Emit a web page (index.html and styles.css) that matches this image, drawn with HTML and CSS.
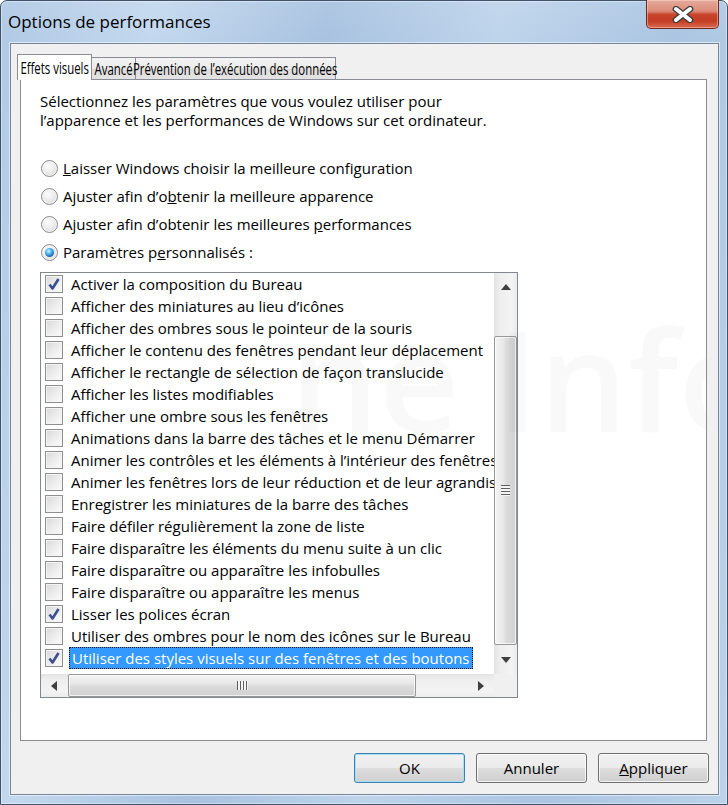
FILE: index.html
```html
<!DOCTYPE html>
<html lang="fr">
<head>
  <meta charset="UTF-8">
  <title>Options de performances</title>
  <link rel="stylesheet" href="styles.css">
</head>
<body>

  <div class="window">
    <div class="titlebar">
      <span class="title">Options de performances</span>
      <button class="close-btn" title="Fermer">
        <svg width="24" height="17" viewBox="0 0 24 17">
          <path d="M5 3 L19 14 M19 3 L5 14" stroke="#3b3b3b" stroke-width="6.5" stroke-linecap="round"/>
          <path d="M5 3 L19 14 M19 3 L5 14" stroke="#ffffff" stroke-width="4" stroke-linecap="round"/>
        </svg>
      </button>
    </div>

    <div class="client">
      <div class="tabs">
        <div class="tab active tab-effects"><span>Effets visuels</span></div>
        <div class="tab tab-advanced"><span>Avancé</span></div>
        <div class="tab tab-dep"><span>Prévention de l’exécution des données</span></div>
      </div>

      <div class="panel">
        <p class="intro">Sélectionnez les paramètres que vous voulez utiliser pour<br>l’apparence et les performances de Windows sur cet ordinateur.</p>

        <div class="radios">
          <label class="radio"><span class="dot"></span><span><u>L</u>aisser Windows choisir la meilleure configuration</span></label>
          <label class="radio"><span class="dot"></span><span>Ajuster afin d’o<u>b</u>tenir la meilleure apparence</span></label>
          <label class="radio"><span class="dot"></span><span>Ajuster afin d’obtenir les meilleures <u>p</u>erformances</span></label>
          <label class="radio"><span class="dot checked"></span><span>Paramètres p<u>e</u>rsonnalisés :</span></label>
        </div>

        <div class="listbox">
          <ul class="items">
            <li><span class="check on"></span>Activer la composition du Bureau</li>
            <li><span class="check"></span>Afficher des miniatures au lieu d’icônes</li>
            <li><span class="check"></span>Afficher des ombres sous le pointeur de la souris</li>
            <li><span class="check"></span>Afficher le contenu des fenêtres pendant leur déplacement</li>
            <li><span class="check"></span>Afficher le rectangle de sélection de façon translucide</li>
            <li><span class="check"></span>Afficher les listes modifiables</li>
            <li><span class="check"></span>Afficher une ombre sous les fenêtres</li>
            <li><span class="check"></span>Animations dans la barre des tâches et le menu Démarrer</li>
            <li><span class="check"></span>Animer les contrôles et les éléments à l’intérieur des fenêtres</li>
            <li><span class="check"></span>Animer les fenêtres lors de leur réduction et de leur agrandissement</li>
            <li><span class="check"></span>Enregistrer les miniatures de la barre des tâches</li>
            <li><span class="check"></span>Faire défiler régulièrement la zone de liste</li>
            <li><span class="check"></span>Faire disparaître les éléments du menu suite à un clic</li>
            <li><span class="check"></span>Faire disparaître ou apparaître les infobulles</li>
            <li><span class="check"></span>Faire disparaître ou apparaître les menus</li>
            <li><span class="check on"></span>Lisser les polices écran</li>
            <li><span class="check"></span>Utiliser des ombres pour le nom des icônes sur le Bureau</li>
            <li class="selected"><span class="check on"></span><span class="label">Utiliser des styles visuels sur des fenêtres et des boutons</span></li>
          </ul>

          <div class="vscroll">
            <div class="sb-btn">
              <svg width="10" height="6" viewBox="0 0 10 6"><path d="M0 6 L5 0 L10 6 Z" fill="#3f3f3f"/></svg>
            </div>
            <div class="sb-track">
              <div class="thumb-v"><span class="grip-v"></span></div>
            </div>
            <div class="sb-btn">
              <svg width="10" height="6" viewBox="0 0 10 6"><path d="M0 0 L10 0 L5 6 Z" fill="#3f3f3f"/></svg>
            </div>
          </div>

          <div class="hscroll">
            <div class="sb-btn">
              <svg width="6" height="10" viewBox="0 0 6 10"><path d="M6 0 L6 10 L0 5 Z" fill="#3f3f3f"/></svg>
            </div>
            <div class="sb-track">
              <div class="thumb-h"><span class="grip-h"></span></div>
            </div>
            <div class="sb-btn">
              <svg width="6" height="10" viewBox="0 0 6 10"><path d="M0 0 L6 5 L0 10 Z" fill="#3f3f3f"/></svg>
            </div>
          </div>

          <div class="sb-corner"></div>
        </div>

        <div class="watermark">ne Info</div>
      </div>

      <div class="buttons">
        <button class="btn default">OK</button>
        <button class="btn">Annuler</button>
        <button class="btn"><u>A</u>ppliquer</button>
      </div>
    </div>
  </div>

</body>
</html>
```

FILE: styles.css
```css
* {
  box-sizing: border-box;
}

body {
  margin: 0;
  font-family: "Open Sans", "Noto Sans", sans-serif;
  font-size: 15px;
  color: #000;
}

/* window frame (aero glass) */
.window {
  width: 728px;
  height: 805px;
  display: flex;
  flex-direction: column;
  border: 1px solid #3f526a;
  border-radius: 7px 7px 0 0;
  box-shadow: inset 0 0 0 1px rgba(255, 255, 255, 0.4);
  background:
    linear-gradient(180deg, rgba(255, 255, 255, 0.08), rgba(255, 255, 255, 0) 40px),
    linear-gradient(100deg, #b0c9e5 0%, #c3d8ee 18%, #a8c2e0 38%, #bed4eb 58%, #abc5e2 78%, #bcd2ea 100%);
}

.titlebar {
  height: 42px;
  display: flex;
  justify-content: space-between;
  align-items: flex-start;
}

.title {
  font-size: 17px;
  line-height: 24px;
  margin: 9px 0 0 7px;
}

.close-btn {
  width: 73px;
  height: 29px;
  margin: -1px 8px 0 0;
  padding: 0;
  border: 1px solid #6e2a1e;
  border-top: none;
  border-radius: 0 0 5px 5px;
  display: flex;
  align-items: center;
  justify-content: center;
  background: linear-gradient(180deg, #e6ab9c 0%, #dc8b78 40%, #c9432b 52%, #c53d25 75%, #d86b51 100%);
  box-shadow: inset 0 0 0 1px rgba(255, 220, 210, 0.45);
}

/* dialog client area */
.client {
  flex: 1;
  margin: 0 8px 9px 9px;
  padding: 10px 9px 0 6px;
  background: #f0f0f0;
  border: 1px solid #76869a;
  box-shadow: 0 0 0 1px rgba(255, 255, 255, 0.55);
  display: flex;
  flex-direction: column;
}

.tabs {
  height: 25px;
  display: flex;
  align-items: flex-end;
}

.tab {
  height: 22px;
  border: 1px solid #898c95;
  border-bottom: none;
  display: flex;
  align-items: center;
  justify-content: center;
  white-space: nowrap;
  background: linear-gradient(180deg, #f3f3f3 0%, #ebebeb 50%, #dedede 51%, #e3e3e3 100%);
}

/* tab captions are drawn narrower than body text */
.tab span {
  display: inline-block;
  font-size: 16.5px;
  transform: scaleX(0.69);
}

.tab.active {
  height: 26px;
  margin-bottom: -1px;
  position: relative;
  z-index: 1;
  background: #fff;
}

.tab-effects { width: 75px; }
.tab-advanced { width: 45px; margin-left: -1px; }
.tab-dep { width: 201px; margin-left: -1px; }

.panel {
  height: 662px;
  margin: 0 2px 0 3px;
  padding: 12px 19px 0;
  background: #fff;
  border: 1px solid #898c95;
  position: relative;
  overflow: hidden;
}

.intro {
  margin: 0;
  line-height: 19px;
}

.radios {
  margin-top: 24px;
  display: flex;
  flex-direction: column;
}

.radio {
  height: 28px;
  display: flex;
  align-items: center;
  gap: 5px;
  padding-left: 1px;
}

.dot {
  width: 17px;
  height: 17px;
  border-radius: 50%;
  border: 1px solid #8a8a8a;
  background: radial-gradient(circle at 40% 35%, #fdfdfd 0%, #ececec 45%, #d2d2d2 100%);
  box-shadow: inset 0 0 0 1px #f6f6f6;
  display: flex;
  align-items: center;
  justify-content: center;
}

.dot.checked::after {
  content: "";
  width: 9px;
  height: 9px;
  border-radius: 50%;
  background: radial-gradient(circle at 40% 35%, #d4f3ff 0%, #5cc2f5 30%, #1c68b4 70%, #0d3b73 100%);
}

/* list of visual effects */
.listbox {
  margin-top: 6px;
  width: 478px;
  height: 426px;
  border: 1px solid #828790;
  display: grid;
  grid-template-columns: 453px 23px;
  grid-template-rows: 401px 23px;
}

.items {
  list-style: none;
  margin: 0;
  padding: 0;
  overflow: hidden;
}

.items li {
  height: 22px;
  display: flex;
  align-items: center;
  padding-left: 4px;
  white-space: nowrap;
}

.check {
  flex: none;
  width: 18px;
  height: 18px;
  margin-right: 8px;
  border: 1px solid #8e8f8f;
  background: linear-gradient(135deg, #d8d8d8 0%, #ececec 50%, #fbfbfb 100%);
  box-shadow: inset 0 0 0 1px #f4f4f4;
}

.check.on {
  background:
    url("data:image/svg+xml,%3Csvg xmlns='http://www.w3.org/2000/svg' width='16' height='16' viewBox='0 0 16 16'%3E%3Cpath d='M3.5 8.5 L6.5 12.5 L12.5 3' fill='none' stroke='%233b4f91' stroke-width='2.6' stroke-linejoin='round'/%3E%3C/svg%3E") center / 16px 16px no-repeat,
    linear-gradient(135deg, #d8d8d8 0%, #ececec 50%, #fbfbfb 100%);
}

.selected .label {
  margin-left: -2px;
  padding: 0 2px;
  height: 22px;
  line-height: 20px;
  color: #fff;
  background: #3399ff;
  border: 1px dotted #1a1a1a;
}

/* scrollbars */
.vscroll {
  display: flex;
  flex-direction: column;
  background: linear-gradient(90deg, #e3e3e3 0%, #eeeeee 25%, #f3f3f3 75%, #ececec 100%);
}

.vscroll .sb-btn {
  height: 28px;
}

.vscroll .sb-track {
  flex: 1;
  padding-top: 35px;
}

.sb-btn {
  display: flex;
  align-items: center;
  justify-content: center;
}

.thumb-v {
  width: 23px;
  height: 309px;
  border: 1px solid #979797;
  border-radius: 2px;
  background: linear-gradient(90deg, #f4f4f4 0%, #e8e8e8 40%, #dadada 55%, #d2d2d2 100%);
  box-shadow: inset 0 0 0 1px rgba(255, 255, 255, 0.7);
  display: flex;
  align-items: center;
  justify-content: center;
}

.grip-v {
  width: 9px;
  height: 11px;
  background: repeating-linear-gradient(180deg, #5e5e5e 0, #5e5e5e 1px, #f4f4f4 1px, #f4f4f4 3px);
}

.hscroll {
  display: flex;
  background: linear-gradient(180deg, #e3e3e3 0%, #eeeeee 25%, #f3f3f3 75%, #ececec 100%);
}

.hscroll .sb-btn {
  width: 26px;
}

.hscroll .sb-track {
  flex: 1;
  padding-left: 1px;
}

.thumb-h {
  width: 348px;
  height: 23px;
  border: 1px solid #979797;
  border-radius: 2px;
  background: linear-gradient(180deg, #f4f4f4 0%, #e8e8e8 40%, #dadada 55%, #d2d2d2 100%);
  box-shadow: inset 0 0 0 1px rgba(255, 255, 255, 0.7);
  display: flex;
  align-items: center;
  justify-content: center;
}

.grip-h {
  width: 11px;
  height: 9px;
  background: repeating-linear-gradient(90deg, #5e5e5e 0, #5e5e5e 1px, #f4f4f4 1px, #f4f4f4 3px);
}

.sb-corner {
  background: #f0f0f0;
}

.watermark {
  position: absolute;
  left: 269px;
  top: 228px;
  font-size: 140px;
  font-weight: 600;
  line-height: 1;
  white-space: nowrap;
  color: rgba(0, 0, 0, 0.025);
  pointer-events: none;
}

/* dialog buttons */
.buttons {
  margin-top: 12px;
  display: flex;
  justify-content: flex-end;
  gap: 11px;
}

.btn {
  width: 111px;
  height: 30px;
  padding: 0;
  font-family: inherit;
  font-size: 15px;
  color: #000;
  border: 1px solid #707070;
  border-radius: 3px;
  background: linear-gradient(180deg, #f2f2f2 0%, #ebebeb 50%, #dddddd 51%, #cfcfcf 100%);
  box-shadow: inset 0 0 0 1px rgba(255, 255, 255, 0.75);
}

.btn.default {
  border-color: #3c7fb1;
  box-shadow: inset 0 0 0 1px #a8dff8;
}
```
